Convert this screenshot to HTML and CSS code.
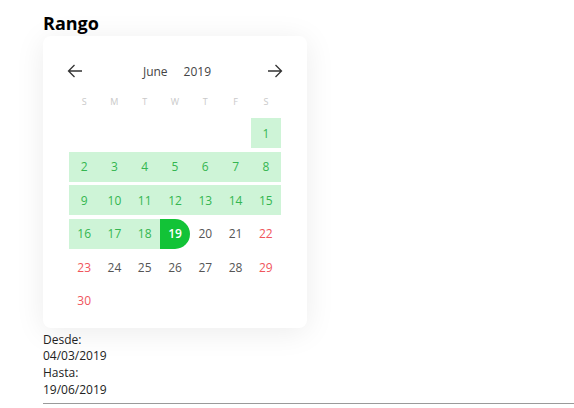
FILE: index.html
```html
<!DOCTYPE html>
<html>
<head>
<meta charset="utf-8">
<link rel="stylesheet" href="styles.css">
</head>
<body>
<div class="page">
  <h1 class="title">Rango</h1>
  <div class="card">
    <div class="head">
      <svg class="arrow" width="16" height="14" viewBox="0 0 16 14"><path d="M15 7H1.5M7.5 1L1.5 7l6 6" fill="none" stroke="#333" stroke-width="1.3"/></svg>
      <div class="month"><span>June</span><span>2019</span></div>
      <svg class="arrow" width="16" height="14" viewBox="0 0 16 14"><path d="M1 7h13.5M8.5 1l6 6-6 6" fill="none" stroke="#333" stroke-width="1.3"/></svg>
    </div>
    <div class="week">
      <span>S</span><span>M</span><span>T</span><span>W</span><span>T</span><span>F</span><span>S</span>
    </div>
    <div class="days">
      <span></span><span></span><span></span><span></span><span></span><span></span><span class="d in">1</span>
      <span class="d in">2</span><span class="d in">3</span><span class="d in">4</span><span class="d in">5</span><span class="d in">6</span><span class="d in">7</span><span class="d in">8</span>
      <span class="d in">9</span><span class="d in">10</span><span class="d in">11</span><span class="d in">12</span><span class="d in">13</span><span class="d in">14</span><span class="d in">15</span>
      <span class="d in">16</span><span class="d in">17</span><span class="d in">18</span><span class="d end">19</span><span class="d">20</span><span class="d">21</span><span class="d we">22</span>
      <span class="d we">23</span><span class="d">24</span><span class="d">25</span><span class="d">26</span><span class="d">27</span><span class="d">28</span><span class="d we">29</span>
      <span class="d we">30</span>
    </div>
  </div>
  <div class="info">
    <div>Desde:</div>
    <div>04/03/2019</div>
    <div>Hasta:</div>
    <div>19/06/2019</div>
  </div>
  <div class="rule"></div>
</div>
</body>
</html>
```

FILE: styles.css
```css
html, body {
  margin: 0;
  padding: 0;
  background: #fff;
}
body {
  font-family: "Open Sans", "Noto Sans", sans-serif;
  color: #222;
}
.page {
  padding: 12px 0 0 43px;
}
.title {
  margin: 0;
  font-size: 18px;
  font-weight: 700;
  line-height: 22px;
  color: #000;
  height: 24px;
}
.card {
  width: 212px;
  margin-left: 0;
  background: #fff;
  border-radius: 8px;
  box-shadow: 0 4px 30px rgba(0, 0, 0, 0.08);
  padding: 20px 26px 12.5px 26px;
}
.head {
  height: 30px;
  display: flex;
  align-items: center;
  justify-content: space-between;
  margin: 0 -2px;
}
.arrow {
  display: block;
}
.month {
  display: flex;
  gap: 16px;
  font-size: 12px;
  color: #444;
  margin-left: 4px;
}
.week {
  margin-top: 7px;
  height: 16px;
  display: grid;
  grid-template-columns: repeat(7, 1fr);
  align-items: center;
  text-align: center;
  font-size: 9px;
  color: #c9c9c9;
}
.days {
  margin-top: 9px;
  display: grid;
  grid-template-columns: repeat(7, 1fr);
  grid-auto-rows: 30px;
  row-gap: 3.5px;
}
.d {
  display: flex;
  align-items: center;
  justify-content: center;
  font-size: 12px;
  color: #555;
}
.d.in {
  background: #cef4d7;
  color: #34b650;
}
.d.end {
  background: #12c337;
  color: #fff;
  font-weight: 600;
  border-radius: 0 15px 15px 0;
}
.d.we {
  color: #f0555c;
}
.info {
  font-size: 12px;
  line-height: 16.7px;
  color: #222;
  margin-top: 3.5px;
}
.rule {
  margin-top: 5px;
  height: 0;
  border-top: 1px solid #9a9a9a;
}
```
